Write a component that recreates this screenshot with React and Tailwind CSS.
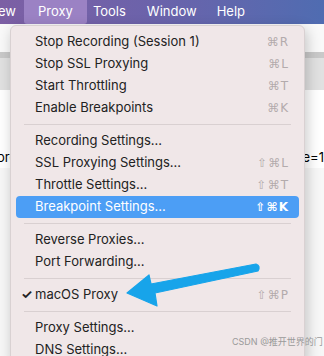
import React from 'react';

const font = { fontFamily: 'Inter, "Liberation Sans", "Noto Sans CJK SC", sans-serif' };

const groups = [
  [
    { label: 'Stop Recording (Session 1)', keys: '⌘R' },
    { label: 'Stop SSL Proxying', keys: '⌘L' },
    { label: 'Start Throttling', keys: '⌘T' },
    { label: 'Enable Breakpoints', keys: '⌘K' },
  ],
  [
    { label: 'Recording Settings...' },
    { label: 'SSL Proxying Settings...', keys: '⇧⌘L' },
    { label: 'Throttle Settings...', keys: '⇧⌘T' },
    { label: 'Breakpoint Settings...', keys: '⇧⌘K', active: true },
  ],
  [{ label: 'Reverse Proxies...' }, { label: 'Port Forwarding...' }],
  [{ label: 'macOS Proxy', keys: '⇧⌘P', checked: true }],
  [{ label: 'Proxy Settings...' }, { label: 'DNS Settings...' }],
];

function Item({ label, keys, active, checked }) {
  return (
    <div
      className={
        'relative mx-[5px] h-[22px] flex items-center pl-[19px] pr-[10px] rounded-[4px] text-[13px] ' +
        (active ? 'bg-[#4c9ef5] text-white' : 'text-[#222]')
      }
    >
      {checked && <span className="absolute left-[5px] text-[13px] font-bold">✓</span>}
      <span className="flex-1">{label}</span>
      {keys && (
        <span
          className={'text-[12px] tracking-[1px] ' + (active ? 'text-white font-semibold' : 'text-[#b3abac]')}
          style={{ fontFamily: '"DejaVu Sans", sans-serif' }}
        >
          {keys}
        </span>
      )}
    </div>
  );
}

export default function App() {
  return (
    <div className="relative w-[324px] h-[356px] overflow-hidden bg-[#f7f7f7]" style={font}>
      {/* menu bar */}
      <div className="h-[24px] flex items-center text-[13px] text-white bg-gradient-to-r from-[#7c5fa4] via-[#6a63ab] to-[#4f6cb1]">
        <span className="ml-[-2px] mr-[8px]">ew</span>
        <span className="h-full px-[14px] flex items-center bg-[#9b82c4] rounded-b-[3px]">Proxy</span>
        <span className="ml-[6px]">Tools</span>
        <span className="ml-[21px]">Window</span>
        <span className="ml-[20px]">Help</span>
      </div>

      {/* window behind */}
      <div className="h-[28px] bg-[#f9f9f9]" />
      <div className="h-[6px] bg-[#c9c9c9]" />
      <div className="h-[32px] bg-[#e1e1e1]" />
      <div className="h-[58px] bg-white" />
      <div className="flex justify-between text-[13px] text-black bg-white">
        <span className="ml-[-3px]">ore</span>
        <span>le=1</span>
      </div>

      {/* dropdown */}
      <div className="absolute left-[10px] top-[25px] w-[295px] h-[340px] bg-[#f0e7e8] rounded-[6px] border border-[#d9d1d2] shadow-[2px_4px_14px_rgba(0,0,0,0.22)] pt-[5px]">
        {groups.map((g, i) => (
          <div key={i}>
            {i > 0 && <div className="mx-[13px] my-[5px] h-px bg-[#d9d0d1]" />}
            {g.map((it) => (
              <Item key={it.label} {...it} />
            ))}
          </div>
        ))}
      </div>

      {/* arrow */}
      <svg className="absolute left-0 top-0" width="324" height="356" viewBox="0 0 324 356">
        <path
          d="M127 293 L149 275 L151 284 L256 264 Q261 266 258 271 L155 293 L157 306 Z"
          fill="#17a4ea"
          stroke="#17a4ea"
          strokeWidth="1.2"
          strokeLinejoin="round"
        />
      </svg>

      <div className="absolute left-[232px] top-[335px] text-[9px] text-[#9a9a9a]">CSDN @推开世界的门</div>
    </div>
  );
}
